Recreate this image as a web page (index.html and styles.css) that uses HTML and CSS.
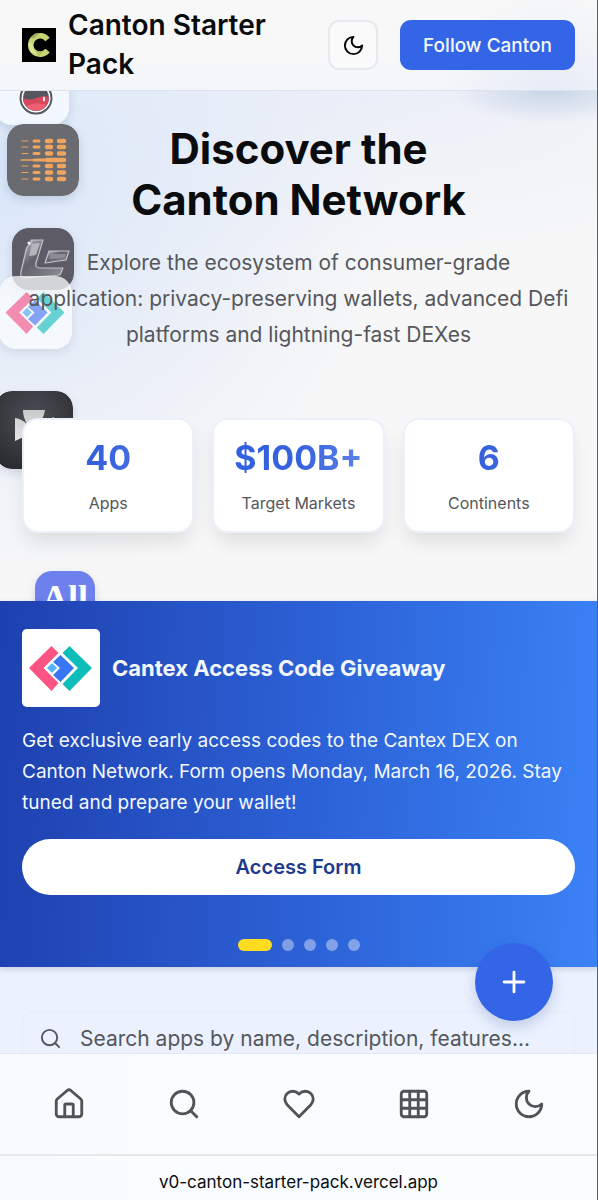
FILE: index.html
```html
<!DOCTYPE html>
<html lang="en">

<head>
  <meta charset="UTF-8">
  <meta name="viewport" content="width=device-width, initial-scale=1.0">
  <title>Canton Starter Pack</title>
  <link rel="stylesheet" href="styles.css">
</head>

<body>
  <div class="app">
    <header class="header">
      <a class="brand" href="#">
        <svg class="brand-logo" viewBox="0 0 34 34" aria-hidden="true">
          <rect width="34" height="34" fill="#000" />
          <path d="M25.500 11.500A9.300 9.300 0 1 0 25.500 22.500" fill="none" stroke="#c9d575" stroke-width="5.500" />
          <path d="M8 10L13 5.500L18 5L12 10.500Z" fill="#a5b25a" />
          <path d="M6 16L10 14L12 22L15 27L9 24Z" fill="#dde68f" />
          <path d="M13 22L17 23.500L22 23L17 28Z" fill="#b3c065" />
        </svg>
        <span class="brand-name">Canton Starter Pack</span>
      </a>
      <button class="theme-btn" type="button" aria-label="Dark mode">
        <svg viewBox="0 0 24 24" class="icon"><path d="M12 3a6 6 0 0 0 9 9 9 9 0 1 1-9-9Z" /></svg>
      </button>
      <button class="follow-btn" type="button">Follow Canton</button>
    </header>

    <main class="main">
      <section class="hero">
        <div class="floats" aria-hidden="true">
          <svg class="tile tile-orb" viewBox="0 0 74 74">
            <rect width="74" height="74" rx="16" fill="#f3f8ff" />
            <circle cx="41" cy="47" r="15.500" fill="#fff" stroke="#55585e" stroke-width="2" />
            <circle cx="41" cy="47" r="13" fill="#55575e" />
            <path d="M28 47Q35 50 41 47T54 46A13 13 0 0 1 28 47Z" fill="#d8485b" />
            <path d="M31 55Q41 50 52 54A13 13 0 0 1 31 55Z" fill="#ef5f73" />
            <ellipse cx="49" cy="48" rx="1" ry="2.500" fill="#fff" />
          </svg>
          <svg class="tile tile-bars" viewBox="0 0 72 72">
            <rect width="72" height="72" rx="16" fill="#696b70" />
            <g fill="none" stroke="#f0a55f" stroke-linecap="round">
              <path d="M15 17h6M15 23h6M15 29.500h6M15 42h6M15 48.500h6M15 55h6" stroke-width="1" />
              <path d="M27 17h5M27 23h5M27 29.500h5M27 42h5M27 48.500h5M27 55h5" stroke-width="3" />
              <path d="M40 17h4M40 23h4M40 29.500h4M40 42h4M40 48.500h4M40 55h4M52 17h5M52 23h5M52 29.500h5M52 42h5M52 48.500h5M52 55h5" stroke-width="4.500" />
              <path d="M14 36h20" stroke-width="1.500" />
              <path d="M27 36h12" stroke-width="3" />
              <path d="M40 36h17" stroke-width="4.500" />
            </g>
          </svg>
          <svg class="tile tile-chrome" viewBox="0 0 62 62">
            <defs>
              <linearGradient id="chrome" x1="0" y1="0" x2="1" y2="1">
                <stop offset="0" stop-color="#c5c5cb" />
                <stop offset=".4" stop-color="#62616b" />
                <stop offset="1" stop-color="#8f8f98" />
              </linearGradient>
            </defs>
            <rect width="62" height="62" rx="14" fill="#5c5b66" />
            <g fill="url(#chrome)" stroke="#c4c4cb" stroke-width="1.200" stroke-linejoin="round">
              <path d="M19 12L31 12L24 35Q23 40 28 40L51 40L48 47L12 50Q8 50 9 44L14 22Q15 17 19 16Z" />
              <path d="M37 23L57 23L54 32L33 35Z" />
            </g>
            <path d="M20 16L28 15L24 27L17 28Z" fill="#b5b5bc" />
            <path d="M39 26L54 26L52 30L37 31Z" fill="#8d8c96" />
            <circle cx="17" cy="15" r="1.500" fill="#fff" />
          </svg>
          <svg class="tile tile-cantex" viewBox="0 0 78 78">
            <rect width="78" height="78" rx="17" fill="#fbfdff" />
            <path d="M29.500 17L36.500 24L21.500 39L36.500 54L29.500 62L7 39Z" fill="#f76c98" />
            <path d="M47.500 17L70 39L47.500 62L40.500 55L56 39L40.500 24Z" fill="#3ccbc6" />
            <path d="M38.500 26L52 39L38.500 53L31 46L38 39L31 33Z" fill="#668df3" />
            <path d="M30 34L35 39L30 44L25 39Z" fill="#66b7f0" />
          </svg>
          <svg class="tile tile-dark" viewBox="0 0 78 78">
            <defs>
              <radialGradient id="night" cx=".5" cy=".35" r=".8">
                <stop offset="0" stop-color="#4c4f57" />
                <stop offset="1" stop-color="#26272b" />
              </radialGradient>
              <linearGradient id="silver" x1="0" y1="0" x2="0" y2="1">
                <stop offset="0" stop-color="#c9c9cb" />
                <stop offset="1" stop-color="#f0f0f0" />
              </linearGradient>
            </defs>
            <rect width="78" height="78" rx="17" fill="url(#night)" />
            <path d="M28 19L50 19Q49 27 43 33L59 26V50L43 43L50 58H28L35 43L20 50V27Q27 28 32 33Q28 26 28 19Z" fill="url(#silver)" />
          </svg>
          <div class="tile tile-all">All</div>
        </div>

        <h1 class="hero-title">Discover the<br>Canton Network</h1>
        <p class="hero-text">Explore the ecosystem of consumer-grade<br>application: privacy-preserving wallets, advanced Defi<br>platforms and lightning-fast DEXes</p>
        <div class="stats">
          <div class="stat">
            <strong class="stat-value">40</strong>
            <span class="stat-label">Apps</span>
          </div>
          <div class="stat">
            <strong class="stat-value">$100B+</strong>
            <span class="stat-label">Target Markets</span>
          </div>
          <div class="stat">
            <strong class="stat-value">6</strong>
            <span class="stat-label">Continents</span>
          </div>
        </div>
      </section>

      <section class="banner">
        <div class="banner-head">
          <svg class="banner-logo" viewBox="0 0 78 78" aria-hidden="true">
            <rect width="78" height="78" rx="5" fill="#fff" />
            <path d="M29.500 17L36.500 24L21.500 39L36.500 54L29.500 62L7 39Z" fill="#fb5483" />
            <path d="M47.500 17L70 39L47.500 62L40.500 55L56 39L40.500 24Z" fill="#0dbdb9" />
            <path d="M38.500 26L52 39L38.500 53L31 46L38 39L31 33Z" fill="#3877f3" />
            <path d="M30 34L35 39L30 44L25 39Z" fill="#55b5f5" />
          </svg>
          <h2 class="banner-title">Cantex Access Code Giveaway</h2>
        </div>
        <p class="banner-text">Get exclusive early access codes to the Cantex DEX on<br>Canton Network. Form opens Monday, March 16, 2026. Stay<br>tuned and prepare your wallet!</p>
        <a class="banner-btn" href="#">Access Form</a>
        <div class="dots">
          <button class="dot active" type="button" aria-label="Slide 1"></button>
          <button class="dot" type="button" aria-label="Slide 2"></button>
          <button class="dot" type="button" aria-label="Slide 3"></button>
          <button class="dot" type="button" aria-label="Slide 4"></button>
          <button class="dot" type="button" aria-label="Slide 5"></button>
        </div>
      </section>

      <section class="search">
        <label class="search-box">
          <svg viewBox="0 0 24 24" class="icon"><circle cx="11" cy="11" r="8" /><path d="m21 21-4.300-4.300" /></svg>
          <input class="search-input" type="text" aria-label="Search apps" placeholder="Search apps by name, description, features...">
        </label>
      </section>
    </main>

    <footer class="footer">
      <button class="add-btn" type="button" aria-label="Add app">
        <svg viewBox="0 0 24 24" class="icon"><path d="M5 12h14M12 5v14" /></svg>
      </button>
      <nav class="nav">
        <a href="#" aria-label="Home">
          <svg viewBox="0 0 24 24" class="icon"><path d="M15 21v-8a1 1 0 0 0-1-1h-4a1 1 0 0 0-1 1v8" /><path d="M3 10a2 2 0 0 1 .709-1.528l7-5.999a2 2 0 0 1 2.582 0l7 5.999A2 2 0 0 1 21 10v9a2 2 0 0 1-2 2H5a2 2 0 0 1-2-2z" /></svg>
        </a>
        <a href="#" aria-label="Search">
          <svg viewBox="0 0 24 24" class="icon"><circle cx="11" cy="11" r="8" /><path d="m21 21-4.300-4.300" /></svg>
        </a>
        <a href="#" aria-label="Favourites">
          <svg viewBox="0 0 24 24" class="icon"><path d="M19 14c1.490-1.460 3-3.210 3-5.500A5.500 5.500 0 0 0 16.500 3c-1.760 0-3 .5-4.500 2-1.500-1.500-2.740-2-4.500-2A5.500 5.500 0 0 0 2 8.500c0 2.300 1.500 4.050 3 5.500l7 7Z" /></svg>
        </a>
        <a href="#" aria-label="Categories">
          <svg viewBox="0 0 24 24" class="icon"><rect width="18" height="18" x="3" y="3" rx="2" /><path d="M3 9h18M3 15h18M9 3v18M15 3v18" /></svg>
        </a>
        <a href="#" aria-label="Theme">
          <svg viewBox="0 0 24 24" class="icon"><path d="M12 3a6 6 0 0 0 9 9 9 9 0 1 1-9-9Z" /></svg>
        </a>
      </nav>
      <div class="address">v0-canton-starter-pack.vercel.app</div>
    </footer>
  </div>
</body>

</html>
```
FILE: styles.css
```css
* {
  padding: 0;
  margin: 0;
  box-sizing: border-box;
}

body {
  font-family: Inter, "Liberation Sans", sans-serif;
  background-color: #f7f7f7;
  color: #0a0b0d;
}

button,
input {
  font-family: inherit;
  border: none;
}

a {
  color: inherit;
  text-decoration: none;
}

.app {
  display: flex;
  flex-direction: column;
  height: 100vh;
  border-right: 1px solid #5a5d63;
}

.icon {
  display: block;
  fill: none;
  stroke: currentColor;
  stroke-width: 2;
  stroke-linecap: round;
  stroke-linejoin: round;
}

/* header */
.header {
  display: flex;
  align-items: center;
  gap: 22px;
  padding: 6px 22px;
  border-bottom: 1px solid #dde3ee;
  background: radial-gradient(circle at 92% 110%, #e6ecf7, transparent 110px), linear-gradient(#f8f8f8 50%, #f4f6f9);
}

.brand {
  display: flex;
  flex: 1;
  align-items: center;
  gap: 12px;
}

.brand-logo {
  flex: none;
  width: 34px;
}

.brand-name {
  font-size: 28px;
  font-weight: 600;
  line-height: 39px;
}

.theme-btn {
  display: flex;
  align-items: center;
  justify-content: center;
  width: 50px;
  height: 50px;
  background: #fafafa;
  border: 2px solid #e6e9f0;
  border-radius: 11px;
}

.theme-btn .icon {
  width: 23px;
}

.follow-btn {
  height: 50px;
  padding: 0 23px;
  font-size: 19px;
  font-weight: 500;
  color: #f3f8ff;
  background: #3465e6;
  border-radius: 11px;
}

.main {
  flex: 1;
  min-height: 0;
  overflow: hidden;
}

/* hero */
.hero {
  position: relative;
  overflow: hidden;
  padding: 32px 22px 68px;
  text-align: center;
  background:
    radial-gradient(ellipse 100px 32px at 92% 0, #c8d5e9, transparent),
    radial-gradient(ellipse 400px 400px at 0 18%, #dae6f9, transparent),
    radial-gradient(ellipse 460px 180px at 65% 0, #ebeff8, transparent),
    #f7f7f7;
}

.hero-title {
  position: relative;
  font-size: 42px;
  font-weight: 700;
  line-height: 51px;
}

.hero-text {
  position: relative;
  margin-top: 20px;
  font-size: 21px;
  line-height: 36px;
  color: #55575c;
  white-space: nowrap;
}

.stats {
  position: relative;
  display: grid;
  grid-template-columns: repeat(3, 1fr);
  gap: 18px;
  margin-top: 65px;
}

.stat {
  display: flex;
  flex-direction: column;
  gap: 10px;
  padding: 17px 0 14px;
  background: #fff;
  border: 2px solid #ecf0fa;
  border-radius: 16px;
  box-shadow: 0 12px 20px -4px #0000001c;
}

.stat-value {
  font-size: 34px;
  line-height: 42px;
  color: transparent;
  background: linear-gradient(90deg, #2f5fe0, #3762de 50%, #6b8bec);
  background-clip: text;
}

.stat-label {
  font-size: 16px;
  line-height: 28px;
  color: #55575c;
}

.tile {
  position: absolute;
  border-radius: 17px;
  box-shadow: 0 4px 10px #2b3a6a26;
}

.tile-orb {
  top: -40px;
  left: -5px;
  width: 74px;
}

.tile-bars {
  top: 33px;
  left: 7px;
  width: 72px;
}

.tile-chrome {
  top: 137px;
  left: 12px;
  width: 62px;
}

.tile-cantex {
  top: 185px;
  left: -1px;
  width: 73px;
  opacity: .75;
}

.tile-dark {
  top: 300px;
  left: -5px;
  width: 78px;
}

.tile-all {
  top: 480px;
  left: 35px;
  width: 60px;
  height: 60px;
  font-family: "Liberation Serif", serif;
  font-size: 36px;
  font-weight: 700;
  line-height: 54px;
  color: #fff;
  background: #6d80ec;
}

/* giveaway banner */
.banner {
  position: relative;
  padding: 28px 22px 16px;
  color: #f3f8ff;
  background: linear-gradient(93deg, #1e40af, #2d63d8 55%, #3b82f6);
  box-shadow: 0 2px 6px #00000026;
}

.banner-head {
  display: flex;
  align-items: center;
  gap: 12px;
}

.banner-logo {
  flex: none;
  width: 78px;
}

.banner-title {
  font-size: 22px;
  font-weight: 700;
  line-height: 34px;
}

.banner-text {
  margin-top: 18px;
  font-size: 19px;
  line-height: 31px;
  white-space: nowrap;
}

.banner-btn {
  display: block;
  margin-top: 21px;
  font-size: 20px;
  font-weight: 600;
  line-height: 56px;
  text-align: center;
  color: #1e3a8a;
  background: #fff;
  border-radius: 28px;
}

.dots {
  display: flex;
  justify-content: center;
  gap: 10px;
  margin-top: 44px;
}

.dot {
  width: 12px;
  height: 12px;
  background: #ffffff66;
  border-radius: 6px;
}

.dot.active {
  width: 34px;
  background: #ffdc20;
}

/* search */
.search {
  height: 140px;
  padding: 44px 22px;
  background: #ebf1fe;
}

.search-box {
  display: flex;
  align-items: center;
  gap: 18px;
  padding: 0 16px;
  border: 1px solid #e6ecf9;
  border-radius: 11px;
  color: #55575c;
}

.search-box .icon {
  flex: none;
  width: 23px;
}

.search-input {
  flex: 1;
  min-width: 0;
  height: 52px;
  font-size: 21px;
  background: transparent;
}

.search-input::placeholder {
  color: #55575c;
}

/* bottom bar */
.footer {
  position: relative;
  background: linear-gradient(90deg, #f7f9fe, #fafdff 30%);
}

.add-btn {
  position: absolute;
  right: 44px;
  bottom: 179px;
  display: flex;
  align-items: center;
  justify-content: center;
  width: 78px;
  height: 78px;
  color: #fff;
  background: #3465e6;
  border-radius: 50%;
  box-shadow: 0 6px 14px #1e3a8a33;
}

.add-btn .icon {
  width: 34px;
}

.nav {
  display: grid;
  grid-template-columns: repeat(5, 1fr);
  justify-items: center;
  padding: 33px 11px;
  color: #505357;
  border-top: 1px solid #e4eaf4;
  border-bottom: 2px solid #e6e9ec;
}

.nav .icon {
  width: 34px;
}

.address {
  padding-top: 8px;
  font-size: 17px;
  line-height: 36px;
  text-align: center;
}
```
